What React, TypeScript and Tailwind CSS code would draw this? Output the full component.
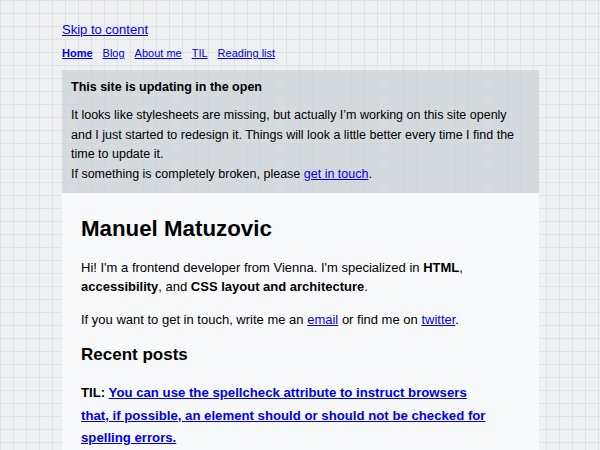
export default function App() {
  return (
    <div className="min-h-screen w-full bg-[#eef0f1] bg-[linear-gradient(to_right,#dfe2e4_1px,transparent_1px),linear-gradient(to_bottom,#dfe2e4_1px,transparent_1px)] bg-[size:13px_13px] font-['Liberation_Sans',Arial,sans-serif] text-black">
      <div className="ml-[62px] w-[477px] pt-[20px]">
        <a href="#main" className="block text-[13px] leading-[20px] text-[#0000ee] underline w-max">
          Skip to content
        </a>

        {/* Nav */}
        <nav className="mt-[6px] flex gap-[10px] text-[11px] leading-[14px]">
          <a href="#" className="font-bold text-[#0000ee] underline">Home</a>
          <a href="#" className="text-[#0000ee] underline">Blog</a>
          <a href="#" className="text-[#0000ee] underline">About me</a>
          <a href="#" className="text-[#0000ee] underline">TIL</a>
          <a href="#" className="text-[#0000ee] underline">Reading list</a>
        </nav>

        {/* Notice */}
        <div className="mt-[10px] bg-[rgba(203,209,213,0.72)] px-[9px] pt-[7px] pb-[8px] text-[12.5px]">
          <p className="font-bold leading-[20px]">This site is updating in the open</p>
          <p className="mt-[9px] leading-[19.7px]">
            It looks like stylesheets are missing, but actually I’m working on this site openly and I just
            started to redesign it. Things will look a little better every time I find the time to update it.
            <br />
            If something is completely broken, please{" "}
            <a href="#" className="text-[#0000ee] underline">get in touch</a>.
          </p>
        </div>

        {/* Main */}
        <main id="main" className="bg-[#f8f9fa] pl-[19px] pr-[46px] pt-[22px] pb-[20px]">
          <h1 className="text-[22.3px] font-bold leading-[28px]">Manuel Matuzovic</h1>
          <p className="mt-[15px] text-[13px] leading-[19.5px]">
            Hi! I'm a frontend developer from Vienna. I'm specialized in <strong>HTML</strong>,{" "}
            <strong>accessibility</strong>, and <strong>CSS layout and architecture</strong>.
          </p>
          <p className="mt-[13px] text-[13px] leading-[19.5px]">
            If you want to get in touch, write me an{" "}
            <a href="#" className="text-[#0000ee] underline">email</a> or find me on{" "}
            <a href="#" className="text-[#0000ee] underline">twitter</a>.
          </p>
          <h2 className="mt-[15px] text-[17px] font-bold leading-[22px]">Recent posts</h2>
          <p className="mt-[16px] text-[13.2px] font-bold leading-[22.5px]">
            TIL:{" "}
            <a href="#" className="text-[#0000ee] underline">
              You can use the spellcheck attribute to instruct browsers that, if possible, an element should or
              should not be checked for spelling errors.
            </a>
          </p>
        </main>
      </div>
    </div>
  );
}
